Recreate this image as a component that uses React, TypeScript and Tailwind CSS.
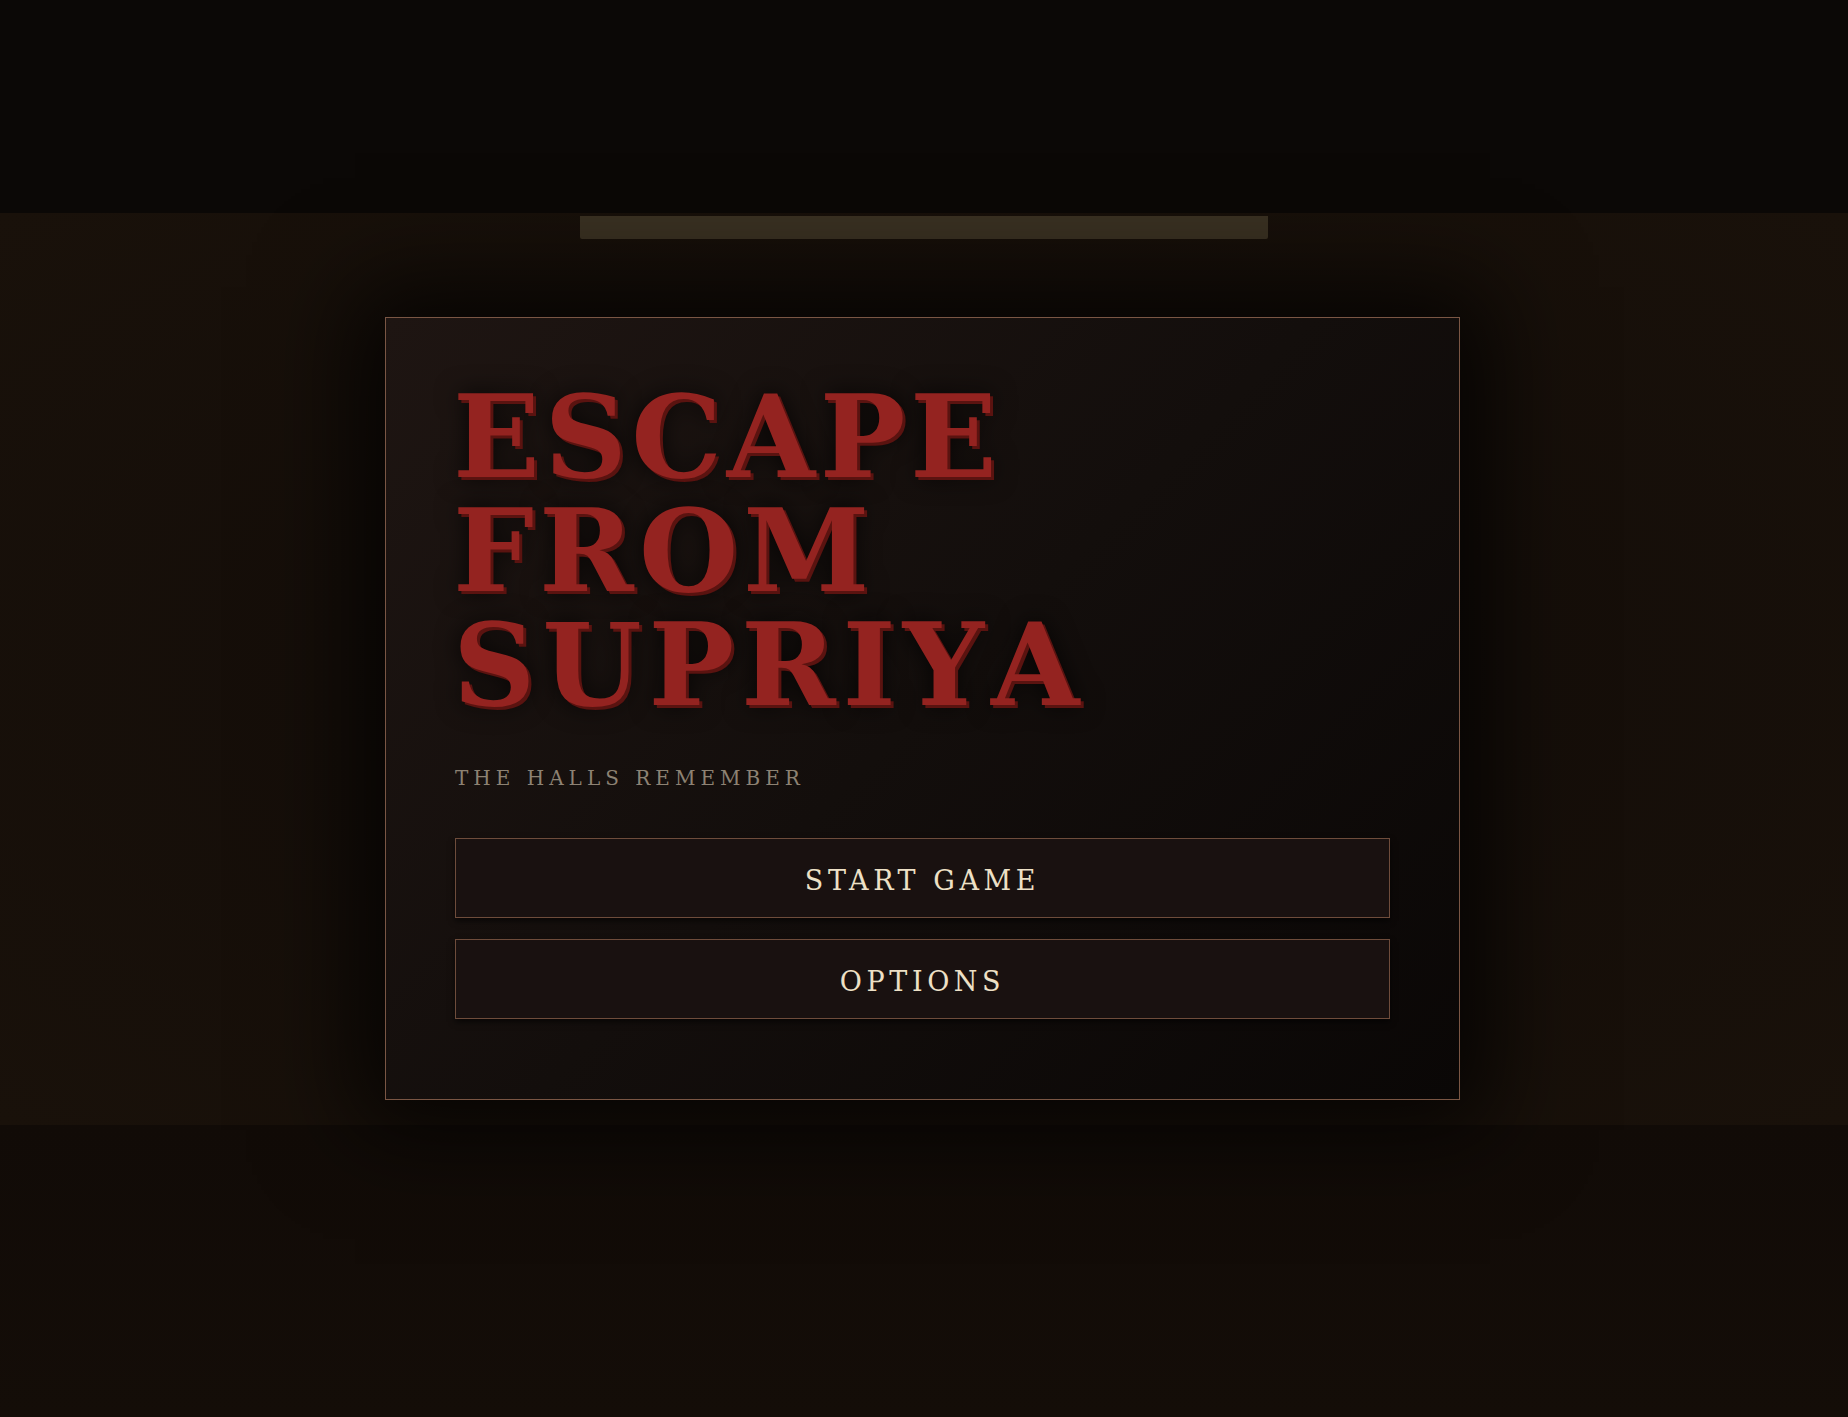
import { useState } from "react";

// TYPES
type MenuItem = {
    id: string;
    label: string;
};

const MENU: MenuItem[] = [
    { id: "start", label: "Start Game" },
    { id: "options", label: "Options" },
];

const serif = "font-['DejaVu_Serif','Liberation_Serif',serif]";

const App = () => {
    const [selected, setSelected] = useState<string | null>(null);

    return (
        <div className={`w-full min-h-screen flex flex-col bg-[#120c08] ${serif}`}>
            {/* ceiling */}
            <div className="h-[213px] bg-[#0b0806]" />

            {/* wall with the lamp and the menu card */}
            <div className="relative z-10 h-[912px] flex flex-col items-center bg-[radial-gradient(ellipse_at_center,#0f0a07_0%,#150e09_45%,#19110a_100%)]">
                <div className="mt-[3px] w-[688px] h-[23px] rounded-b-[2px] bg-[#3a3122]" />

                <div className="mt-[78px] mr-[3px] w-[1075px] border border-[#7a5644] bg-[linear-gradient(135deg,#1e1512_0%,#130e0c_50%,#0a0706_100%)] shadow-[0_0_90px_30px_rgba(0,0,0,0.75)] pt-[62px] pb-[80px] px-[69px]">
                    <h1 className="-ml-[2px] flex flex-col text-[114px] leading-none font-bold [font-kerning:none] text-[#942320] [text-shadow:3px_3px_0_#5a1310,0_0_24px_rgba(0,0,0,0.8)]">
                        <span className="tracking-[0.04em]">ESCAPE</span>
                        <span className="tracking-[0.045em]">FROM</span>
                        <span className="tracking-[0.06em]">SUPRIYA</span>
                    </h1>

                    <p className="mt-[41px] text-[20px] leading-[30px] tracking-[0.25em] text-[#8d8273]">
                        THE HALLS REMEMBER
                    </p>

                    <div className="mt-[45px] flex flex-col gap-[21px]">
                        {MENU.map((item) => (
                            <button
                                key={item.id}
                                onClick={() => setSelected(item.id)}
                                className={`h-[80px] w-full pt-[7px] border border-[#6e4c3b] bg-[#191110] text-[27px] tracking-[0.17em] uppercase text-[#ede0c6] shadow-[0_3px_6px_rgba(0,0,0,0.6)] ${
                                    selected === item.id ? "bg-[#221816]" : ""
                                }`}
                            >
                                {item.label}
                            </button>
                        ))}
                    </div>
                </div>
            </div>

            {/* floor */}
            <div className="flex-1 bg-[linear-gradient(180deg,#110b07_0%,#140d08_100%)]" />
        </div>
    );
};

export default App;
